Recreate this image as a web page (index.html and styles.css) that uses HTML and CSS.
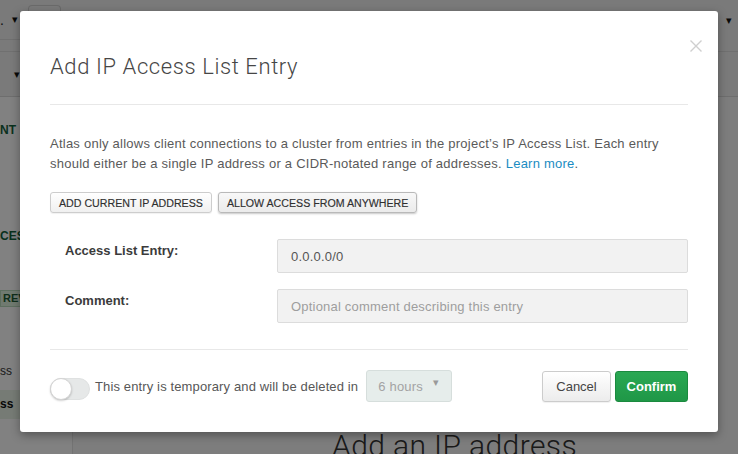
FILE: index.html
```html
<!DOCTYPE html>
<html lang="en">
<head>
<meta charset="utf-8">
<title>Add IP Access List Entry</title>
<link rel="stylesheet" href="styles.css">
</head>
<body>
<div class="page">
  <header class="topbar">
    <div class="topbar-row">
      <div class="org"><span class="org-name">.</span><span class="caret-dark">&#9662;</span></div>
      <div class="org-box"></div>
      <div class="topbar-fill"></div>
      <span class="caret-dark caret-right">&#9662;</span>
    </div>
    <div class="topbar-row2">
      <span class="caret-dark">&#9662;</span>
    </div>
  </header>
  <div class="content">
    <aside class="sidebar">
      <div class="side-section side-first">NT</div>
      <div class="side-section side-second">CES</div>
      <div class="side-badge">REVI</div>
      <div class="side-link">ss</div>
      <div class="side-link side-active">ss</div>
    </aside>
    <main class="main">
      <h1 class="main-title">Add an IP address</h1>
    </main>
  </div>
</div>
<div class="backdrop"></div>
<div class="modal" role="dialog">
  <svg class="close" width="12" height="12" viewBox="0 0 12 12"><path d="M0.5 0.5L11.5 11.5M11.5 0.5L0.5 11.5" stroke="#cfcfcf" stroke-width="1.4" fill="none"/></svg>
  <div class="modal-header">
    <h2 class="modal-title">Add IP Access List Entry</h2>
  </div>
  <p class="intro">Atlas only allows client connections to a cluster from entries in the project’s IP Access List. Each entry should either be a single IP address or a CIDR-notated range of addresses. <a href="#">Learn more</a>.</p>
  <div class="quick-actions">
    <button class="btn-small">ADD CURRENT IP ADDRESS</button>
    <button class="btn-small btn-small-active">ALLOW ACCESS FROM ANYWHERE</button>
  </div>
  <div class="form">
    <div class="form-row">
      <label class="form-label">Access List Entry:</label>
      <input class="form-input" type="text" value="0.0.0.0/0">
    </div>
    <div class="form-row">
      <label class="form-label">Comment:</label>
      <input class="form-input" type="text" placeholder="Optional comment describing this entry">
    </div>
  </div>
  <div class="modal-footer">
    <span class="toggle"><span class="toggle-knob"></span></span>
    <span class="temp-text">This entry is temporary and will be deleted in</span>
    <span class="duration"><span>6 hours</span><span class="duration-caret">&#9662;</span></span>
    <span class="footer-spacer"></span>
    <button class="btn btn-cancel">Cancel</button>
    <button class="btn btn-confirm">Confirm</button>
  </div>
</div>
</body>
</html>
```
FILE: styles.css
```css
html, body {
  margin: 0;
  padding: 0;
}
body {
  width: 738px;
  height: 454px;
  overflow: hidden;
  position: relative;
  font-family: "Liberation Sans", Arial, sans-serif;
  background: #f5f5f5;
}

/* background page */
.page {
  display: flex;
  flex-direction: column;
  height: 454px;
}
.topbar {
  background: #efefef;
}
.topbar-row {
  display: flex;
  align-items: flex-start;
  height: 52px;
  border-bottom: 1px solid #dcdcdc;
  box-sizing: border-box;
}
.org {
  display: flex;
  align-items: center;
  gap: 8px;
  height: 40px;
  width: 28px;
  border-bottom: 1px solid #dcdcdc;
  box-sizing: border-box;
  font-size: 14px;
  color: #222;
}
.caret-dark {
  font-size: 11px;
  color: #111;
}
.org-box {
  width: 33px;
  height: 35px;
  margin-top: 5px;
  border: 1px solid #d0d0d0;
  border-bottom: none;
  border-radius: 4px 4px 0 0;
  box-sizing: border-box;
}
.topbar-fill {
  flex: 1;
}
.caret-right {
  margin: 14px 6px 0 0;
}
.topbar-row2 {
  height: 45px;
  border-bottom: 1px solid #d8d8d8;
  padding-left: 14px;
  display: flex;
  align-items: center;
  box-sizing: border-box;
}
.content {
  flex: 1;
  display: flex;
}
.sidebar {
  width: 73px;
  background: #fdfdfd;
  border-right: 1px solid #e2e2e2;
  box-sizing: border-box;
  display: flex;
  flex-direction: column;
  padding-top: 25px;
}
.side-section {
  font-size: 12px;
  font-weight: bold;
  color: #13603c;
  line-height: 16px;
}
.side-second {
  margin-top: 90px;
}
.side-badge {
  margin-top: 46px;
  width: 40px;
  font-size: 11px;
  font-weight: bold;
  color: #1f5a34;
  background: #dcefdc;
  border: 1px solid #b7d8bb;
  line-height: 15px;
  padding: 0 2px;
}
.side-link {
  margin-top: 56px;
  font-size: 12px;
  color: #333;
  line-height: 16px;
}
.side-active {
  margin-top: 11px;
  font-weight: bold;
  color: #111;
  background: #e7f1e6;
  line-height: 29px;
}
.main {
  flex: 1;
  padding: 332px 0 0 259px;
}
.main-title {
  margin: 0;
  font-family: Roboto, "Liberation Sans", sans-serif;
  font-weight: 300;
  font-size: 30px;
  letter-spacing: 0.4px;
  line-height: 34px;
  color: #333;
  white-space: nowrap;
}
.backdrop {
  position: absolute;
  inset: 0;
  background: rgba(0, 0, 0, 0.49);
}

/* modal */
.modal {
  position: absolute;
  left: 20px;
  top: 11px;
  width: 698px;
  height: 421px;
  box-sizing: border-box;
  padding: 0 30px;
  background: #fff;
  border-radius: 3px;
  box-shadow: 0 3px 10px rgba(0, 0, 0, 0.35);
}
.close {
  position: absolute;
  right: 16px;
  top: 29px;
}
.modal-header {
  padding: 43px 0 24px;
  border-bottom: 1px solid #e8e8e8;
}
.modal-title {
  margin: 0;
  font-family: Roboto, "Liberation Sans", sans-serif;
  font-weight: 300;
  font-size: 22px;
  letter-spacing: 0.6px;
  line-height: 26px;
  color: #464646;
}
.intro {
  margin: 29px 0 0;
  font-size: 13px;
  letter-spacing: 0.24px;
  line-height: 20px;
  color: #5a5a5a;
}
.intro a {
  color: #1a8cc2;
  text-decoration: none;
}
.quick-actions {
  display: flex;
  gap: 6px;
  margin-top: 18px;
}
.btn-small {
  height: 21px;
  padding: 0 8px;
  font-family: "Liberation Sans", Arial, sans-serif;
  font-size: 10.65px;
  color: #2f2f2f;
  background: linear-gradient(#ffffff, #f0f0f0);
  border: 1px solid #cdcdcd;
  border-radius: 3px;
  box-shadow: 0 1px 1px rgba(0, 0, 0, 0.06);
  -webkit-text-stroke: 0.15px #2f2f2f;
}
.btn-small-active {
  background: linear-gradient(#f8f8f8, #ebebeb);
  border-color: #b9b9b9;
  box-shadow: 0 1px 2px rgba(0, 0, 0, 0.22);
}
.form {
  margin-top: 26px;
  display: flex;
  flex-direction: column;
  gap: 16px;
}
.form-row {
  display: flex;
  align-items: flex-start;
}
.form-label {
  width: 227px;
  box-sizing: border-box;
  padding: 2px 0 0 15px;
  font-size: 13px;
  line-height: 20px;
  font-weight: bold;
  color: #3b3b3b;
}
.form-input {
  flex: 1;
  height: 34px;
  box-sizing: border-box;
  margin: 0;
  padding: 0 13px;
  border: 1px solid #dcdcdc;
  border-radius: 2px;
  background: #f2f2f2;
  font-family: "Liberation Sans", Arial, sans-serif;
  font-size: 13px;
  letter-spacing: 0.2px;
  color: #555;
  outline: none;
}
.form-input::placeholder {
  color: #9e9e9e;
}
.modal-footer {
  margin-top: 26px;
  padding-top: 20px;
  border-top: 1px solid #e8e8e8;
  display: flex;
  align-items: center;
}
.toggle {
  width: 40px;
  height: 22px;
  margin-top: 6px;
  box-sizing: border-box;
  border-radius: 11px;
  background: #e6e8e8;
  border: 1px solid #dfe1e1;
  display: flex;
  align-items: center;
}
.toggle-knob {
  width: 22px;
  height: 22px;
  margin-left: -1px;
  box-sizing: border-box;
  border-radius: 50%;
  background: #fff;
  border: 1px solid #d4d4d4;
  box-shadow: 0 1px 2px rgba(0, 0, 0, 0.18);
}
.temp-text {
  margin-left: 5px;
  font-size: 13px;
  letter-spacing: 0.13px;
  color: #575757;
}
.duration {
  margin-left: 8px;
  width: 86px;
  height: 32px;
  box-sizing: border-box;
  padding: 0 12px 0 11px;
  display: flex;
  align-items: center;
  justify-content: space-between;
  background: #e6edeb;
  border: 1px solid #d6dedc;
  border-radius: 3px;
  font-size: 13px;
  letter-spacing: 0.2px;
  color: #a3a3a3;
}
.duration-caret {
  font-size: 11px;
  color: #9a9a9a;
  margin-top: -8px;
}
.footer-spacer {
  flex: 1;
}
.btn {
  height: 31px;
  box-sizing: border-box;
  border-radius: 3px;
  font-family: "Liberation Sans", Arial, sans-serif;
  font-size: 13px;
}
.btn-cancel {
  width: 69px;
  color: #444;
  background: linear-gradient(#ffffff, #ececec);
  border: 1px solid #cccccc;
  box-shadow: 0 1px 1px rgba(0, 0, 0, 0.06);
}
.btn-confirm {
  width: 73px;
  margin-left: 4px;
  color: #fff;
  font-weight: bold;
  background: linear-gradient(#2aa853, #1f9747);
  border: 1px solid #1b8a3f;
}
```
